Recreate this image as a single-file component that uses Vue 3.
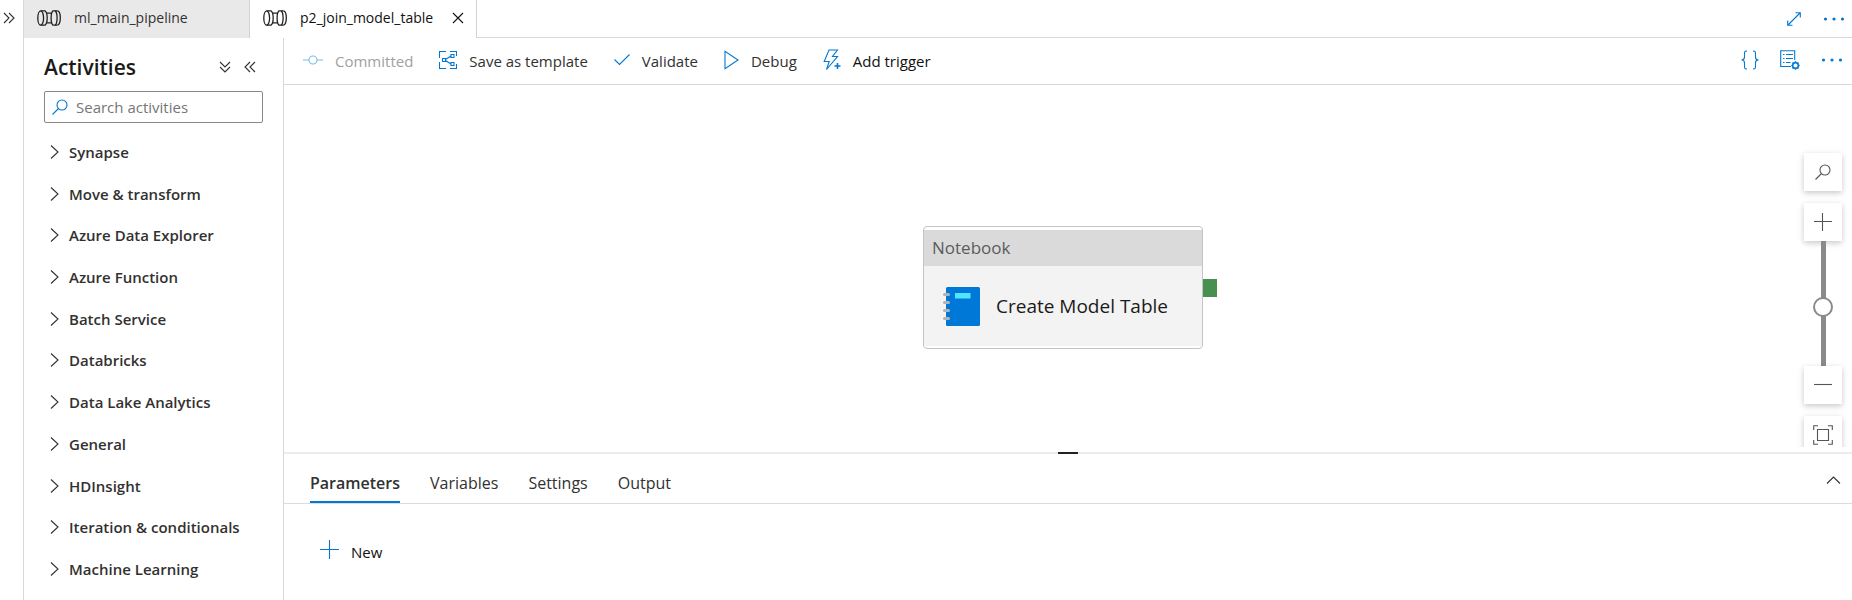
<script setup>
import { ref } from 'vue'

const search = ref('')
const zoomLevel = ref(47)
const openTabs = [
  { name: 'ml_main_pipeline', active: false },
  { name: 'p2_join_model_table', active: true },
]
const activities = [
  'Synapse',
  'Move & transform',
  'Azure Data Explorer',
  'Azure Function',
  'Batch Service',
  'Databricks',
  'Data Lake Analytics',
  'General',
  'HDInsight',
  'Iteration & conditionals',
  'Machine Learning',
]
const panels = ['Parameters', 'Variables', 'Settings', 'Output']
const activePanel = ref('Parameters')
</script>

<template>
  <div class="studio">
    <aside class="rail">
      <button class="icon-btn" aria-label="Expand navigation">
        <svg width="12" height="12" viewBox="0 0 12 12"><path d="M1 1l5 5-5 5M6 1l5 5-5 5" /></svg>
      </button>
    </aside>

    <div class="workspace">
      <header class="tabbar">
        <div v-for="tab in openTabs" :key="tab.name" class="file-tab" :class="{ active: tab.active }">
          <button class="file-name">
            <svg class="pipe" width="24" height="16" viewBox="0 0 24 16">
              <ellipse cx="3.700" cy="8" rx="2.900" ry="7.200" />
              <path d="M3.700.8H8c1.600 1.200 2.200 4.200 2.200 7.200s-.6 6-2.200 7.200H3.700" />
              <path d="M9.700 3.200h5M9.700 12.800h5" />
              <path d="M20.300.8H16c-1.400 1.200-1.900 4.200-1.900 7.200s.5 6 1.900 7.200h4.300" />
              <path d="M18.300.8c1.300 1.500 1.800 4.200 1.800 7.200s-.5 5.700-1.800 7.200" />
              <path d="M20.300.8c2 0 3 3.600 3 7.200s-1 7.200-3 7.200" />
            </svg>
            <span>{{ tab.name }}</span>
          </button>
          <button v-if="tab.active" class="icon-btn" aria-label="Close tab">
            <svg width="12" height="12" viewBox="0 0 12 12"><path d="M1 1l10 10M11 1L1 11" /></svg>
          </button>
        </div>
        <div class="tab-tools">
          <button class="icon-btn blue" aria-label="Full screen">
            <svg width="14" height="14" viewBox="0 0 14 14"><path d="M1 13L13 1M8.500.7h4.800v4.800M.7 8.500v4.800h4.800" /></svg>
          </button>
          <button class="icon-btn blue" aria-label="More tab options">
            <svg class="dots" width="22" height="4" viewBox="0 0 22 4"><circle cx="2.500" cy="2" r="1.600" /><circle cx="11" cy="2" r="1.600" /><circle cx="19.500" cy="2" r="1.600" /></svg>
          </button>
        </div>
      </header>

      <div class="body">
        <aside class="activities">
          <div class="activities-head">
            <h2>Activities</h2>
            <button class="icon-btn" aria-label="Expand all">
              <svg width="12" height="12" viewBox="0 0 12 12"><path d="M1 1l5 5 5-5M1 6l5 5 5-5" /></svg>
            </button>
            <button class="icon-btn" aria-label="Collapse panel">
              <svg width="12" height="12" viewBox="0 0 12 12"><path d="M6 1L1 6l5 5M11 1L6 6l5 5" /></svg>
            </button>
          </div>
          <label class="search">
            <svg width="16" height="16" viewBox="0 0 16 16"><circle cx="10" cy="6" r="5" /><path d="M6.500 9.500L.5 15.500" /></svg>
            <input v-model="search" type="text" placeholder="Search activities" aria-label="Search activities" />
          </label>
          <ul>
            <li v-for="name in activities" :key="name">
              <button class="group">
                <svg width="9" height="14" viewBox="0 0 9 14"><path d="M1 .5L8 7l-7 6.500" /></svg>
                <span>{{ name }}</span>
              </button>
            </li>
          </ul>
        </aside>

        <main class="editor">
          <div class="toolbar">
            <button class="tool" disabled>
              <svg width="20" height="20" viewBox="0 0 20 20"><circle cx="10" cy="10" r="4" /><path d="M0 10h6M14 10h6" /></svg>
              <span>Committed</span>
            </button>
            <button class="tool">
              <svg width="18" height="18" viewBox="0 0 18 18" stroke-linecap="butt">
                <path d="M7 .5H.5V7M.5 11v6.500H7M11 .5h6.500V5M17.500 13v4.500H11" />
                <path d="M3.500 7.500h3v3h-3zM12 3.500h3v3h-3zM12 11.500h3v3h-3zM6.500 8.500L12 5M6.500 9.500L12 13" />
              </svg>
              <span>Save as template</span>
            </button>
            <button class="tool">
              <svg width="16" height="18" viewBox="0 0 16 18"><path d="M.5 8.500l5 5L15.500 3.500" /></svg>
              <span>Validate</span>
            </button>
            <button class="tool">
              <svg width="15" height="20" viewBox="0 0 15 20"><path d="M1 1.200v17.600L14 10z" /></svg>
              <span>Debug</span>
            </button>
            <button class="tool strong">
              <svg width="18" height="22" viewBox="0 0 18 22">
                <path d="M6 1h8.500L9.500 7.500h5L3.500 20.500l2.700-8H1.200z" /><path d="M14.500 14v6M11.500 17h6" stroke-width="1.600" />
              </svg>
              <span>Add trigger</span>
            </button>
            <div class="toolbar-end">
              <button class="icon-btn blue" aria-label="View code">
                <svg width="18" height="20" viewBox="0 0 18 20"><path d="M6 1C3.500 1 3.500 2 3.500 4v3c0 2-.8 3-3 3 2.200 0 3 1 3 3v3c0 2 0 3 2.500 3M12 1c2.500 0 2.500 1 2.500 3v3c0 2 .8 3 3 3-2.200 0-3 1-3 3v3c0 2 0 3-2.500 3" /></svg>
              </button>
              <button class="icon-btn blue" aria-label="Properties">
                <svg width="20" height="20" viewBox="0 0 20 20">
                  <path d="M11 16.500H.7V.7h14V10M3 4.500h1.500M6 4.500h7M3 8.500h1.500M6 8.500h7M3 12.500h1.500M6 12.500h4.500" />
                  <circle cx="15.500" cy="15.500" r="2.800" stroke-width="1.500" />
                  <path d="M15.500 11.300v1.600M15.500 18.100v1.600M11.300 15.500h1.600M18.100 15.500h1.600M12.500 12.500l1.100 1.100M17.400 17.400l1.100 1.100M12.500 18.500l1.100-1.100M17.400 13.600l1.100-1.100" stroke-width="1.600" />
                </svg>
              </button>
              <button class="icon-btn blue" aria-label="More actions">
                <svg class="dots" width="22" height="4" viewBox="0 0 22 4"><circle cx="2.500" cy="2" r="1.600" /><circle cx="11" cy="2" r="1.600" /><circle cx="19.500" cy="2" r="1.600" /></svg>
              </button>
            </div>
          </div>

          <section class="canvas">
            <article class="node">
              <header>Notebook</header>
              <div class="node-body">
                <svg width="38" height="40" viewBox="0 0 38 40">
                  <rect x="4" y="1" width="34" height="39" rx="1.500" fill="#0078d7" />
                  <rect x="13" y="7" width="15.500" height="5.500" fill="#50e6ff" />
                  <g fill="#b3b3b3"><rect x="1" y="7" width="7" height="3" rx="1.500" /><rect x="1" y="15" width="7" height="3" rx="1.500" /><rect x="1" y="23" width="7" height="3" rx="1.500" /><rect x="1" y="31" width="7" height="3" rx="1.500" /></g>
                </svg>
                <span>Create Model Table</span>
              </div>
              <i class="port"></i>
            </article>

            <div class="zoom">
              <button class="zoom-btn" aria-label="Search canvas">
                <svg width="16" height="16" viewBox="0 0 16 16"><circle cx="10" cy="6" r="5" /><path d="M6.500 9.500L.5 15.500" /></svg>
              </button>
              <div class="zoom-scale">
                <button class="zoom-btn" aria-label="Zoom in">
                  <svg width="18" height="18" viewBox="0 0 18 18"><path d="M8.500 0v18M0 8.500h18" /></svg>
                </button>
                <input v-model="zoomLevel" type="range" min="0" max="100" aria-label="Zoom level" />
                <button class="zoom-btn" aria-label="Zoom out">
                  <svg width="18" height="18" viewBox="0 0 18 18"><path d="M0 8.500h18" /></svg>
                </button>
              </div>
              <button class="zoom-btn" aria-label="Zoom to fit">
                <svg width="20" height="20" viewBox="0 0 20 20"><path d="M5 .7H.7V5M15 .7h4.300V5M5 19.300H.7V15M15 19.300h4.300V15M4.500 4.500h11v11h-11z" /></svg>
              </button>
            </div>
          </section>

          <section class="details">
            <div class="splitter"><i></i></div>
            <nav class="panel-tabs">
              <button
                v-for="panel in panels"
                :key="panel"
                :class="{ active: panel === activePanel }"
                @click="activePanel = panel"
              >
                {{ panel }}
              </button>
              <button class="icon-btn collapse" aria-label="Collapse details">
                <svg width="15" height="8" viewBox="0 0 15 8"><path d="M1 7.500l6.500-6.500L14 7.500" /></svg>
              </button>
            </nav>
            <button class="new">
              <svg width="19" height="19" viewBox="0 0 19 19"><path d="M9.500 0v19M0 9.500h19" /></svg>
              <span>New</span>
            </button>
          </section>
        </main>
      </div>
    </div>
  </div>
</template>

<style>
body {
  margin: 0;
}
</style>

<style scoped>
* {
  box-sizing: border-box;
}
.studio {
  display: flex;
  height: 100vh;
  overflow: hidden;
  background: #fff;
  color: #323130;
  font: 15px/20px "Open Sans", "Noto Sans", sans-serif;
}
button {
  padding: 0;
  border: 0;
  background: none;
  color: inherit;
  font: inherit;
  display: flex;
  align-items: center;
}
svg {
  flex: none;
  fill: none;
  stroke: currentColor;
  stroke-width: 1.1;
}
.icon-btn {
  justify-content: center;
}
.blue {
  color: #0078d4;
}
.dots {
  fill: currentColor;
  stroke: none;
}
.rail {
  flex: none;
  width: 24px;
  padding: 12px 0 0 3px;
  border-right: 1px solid #d8d8d8;
}
.workspace {
  flex: 1;
  min-width: 0;
  display: flex;
  flex-direction: column;
}

.tabbar {
  flex: none;
  display: flex;
  height: 38px;
}
.file-tab {
  display: flex;
  align-items: center;
  width: 226px;
  padding: 0 12px 2px 13px;
  background: #e9e9e9;
  border-right: 1px solid #d2d2d2;
  font-size: 14px;
}
.file-tab.active {
  width: 227px;
  background: #fff;
  color: #111;
  font-weight: 500;
}
.file-name {
  flex: 1;
  gap: 13px;
}
.pipe {
  color: #222;
  stroke-width: 1.3;
}
.tab-tools {
  flex: 1;
  display: flex;
  align-items: center;
  justify-content: flex-end;
  gap: 22px;
  padding-right: 7px;
  border-bottom: 1px solid #d8d8d8;
}

.body {
  flex: 1;
  min-height: 0;
  display: flex;
}
.activities {
  flex: none;
  width: 260px;
  padding: 15px 20px 10px;
  border-right: 1px solid #d8d8d8;
  display: flex;
  flex-direction: column;
}
.activities-head {
  display: flex;
  align-items: center;
  gap: 13px;
  height: 28px;
  padding-right: 7px;
}
h2 {
  flex: 1;
  margin: 0;
  font-size: 21px;
  font-weight: 600;
  color: #1b1a19;
}
.search {
  display: flex;
  align-items: center;
  gap: 8px;
  height: 32px;
  margin-top: 10px;
  padding: 0 7px;
  border: 1px solid #8a8886;
  border-radius: 2px;
  color: #0078d4;
}
.search input {
  flex: 1;
  min-width: 0;
  padding: 0;
  border: 0;
  outline: 0;
  background: none;
  font: inherit;
  color: #323130;
}
.search input::placeholder {
  color: #767676;
}
ul {
  flex: 1;
  display: grid;
  grid-auto-rows: 1fr;
  margin: 8px 0 0;
  padding: 0;
  list-style: none;
}
li {
  display: flex;
}
.group {
  gap: 10px;
  padding-left: 6px;
  font-weight: 600;
}

.editor {
  flex: 1;
  min-width: 0;
  display: flex;
  flex-direction: column;
}
.toolbar {
  flex: none;
  display: flex;
  align-items: center;
  gap: 26px;
  height: 47px;
  padding: 0 9px 0 19px;
  border-bottom: 1px solid #d8d8d8;
}
.tool {
  gap: 12px;
}
.tool svg {
  color: #0078d4;
  margin-bottom: 2px;
}
.tool:disabled {
  color: #a19f9d;
}
.tool:disabled svg {
  opacity: 0.5;
}
.strong {
  color: #111;
}
.toolbar-end {
  flex: 1;
  display: flex;
  align-items: center;
  justify-content: flex-end;
  gap: 21px;
  padding-bottom: 2px;
}

.canvas {
  flex: 1;
  position: relative;
  overflow: hidden;
  margin-bottom: 5px;
}
.node {
  position: absolute;
  left: 639px;
  top: 141px;
  width: 280px;
  padding: 3px 0 2px;
  border: 1px solid #c4c4c4;
  border-radius: 4px;
}
.node header {
  height: 36px;
  padding-left: 8px;
  background: #dadada;
  color: #5c5c5c;
  font-size: 17px;
  line-height: 36px;
}
.node-body {
  display: flex;
  align-items: center;
  gap: 16px;
  height: 80px;
  padding-left: 18px;
  background: #f3f3f3;
  color: #1b1a19;
  font-size: 19px;
}
.node-body svg {
  stroke: none;
}
.port {
  position: absolute;
  right: -15px;
  top: 52px;
  width: 14px;
  height: 18px;
  background: #498f51;
}
.zoom {
  position: absolute;
  top: 68px;
  right: 10px;
  display: flex;
  flex-direction: column;
  gap: 12px;
  color: #555;
}
.zoom-scale {
  display: flex;
  flex-direction: column;
  align-items: center;
}
.zoom-btn {
  justify-content: center;
  width: 38px;
  height: 38px;
  background: #fff;
  box-shadow: 0 2px 6px rgba(0, 0, 0, 0.22);
}
.zoom input {
  appearance: none;
  writing-mode: vertical-lr;
  direction: rtl;
  width: 20px;
  height: 125px;
  margin: 0;
  background: linear-gradient(#8a8a8a, #8a8a8a) center / 5px 100% no-repeat;
}
.zoom input::-webkit-slider-thumb {
  appearance: none;
  width: 20px;
  height: 20px;
  border: 2px solid #8a8a8a;
  border-radius: 50%;
  background: #fff;
}

.details {
  flex: none;
  height: 148px;
}
.splitter {
  display: flex;
  justify-content: center;
  height: 2px;
  background: #ececec;
}
.splitter i {
  width: 20px;
  background: #222;
}
.panel-tabs {
  display: flex;
  gap: 30px;
  height: 50px;
  padding: 0 11px 0 26px;
  border-bottom: 1px solid #dcdcdc;
  font-size: 16px;
}
.panel-tabs button {
  padding-top: 10px;
  border-bottom: 2px solid transparent;
}
.panel-tabs .active {
  border-bottom-color: #0078d4;
  font-weight: 600;
}
.panel-tabs .collapse {
  margin-left: auto;
  padding-top: 4px;
}
.new {
  gap: 12px;
  margin: 36px 0 0 36px;
  color: #111;
}
.new svg {
  color: #0078d4;
  margin-bottom: 4px;
}
</style>
